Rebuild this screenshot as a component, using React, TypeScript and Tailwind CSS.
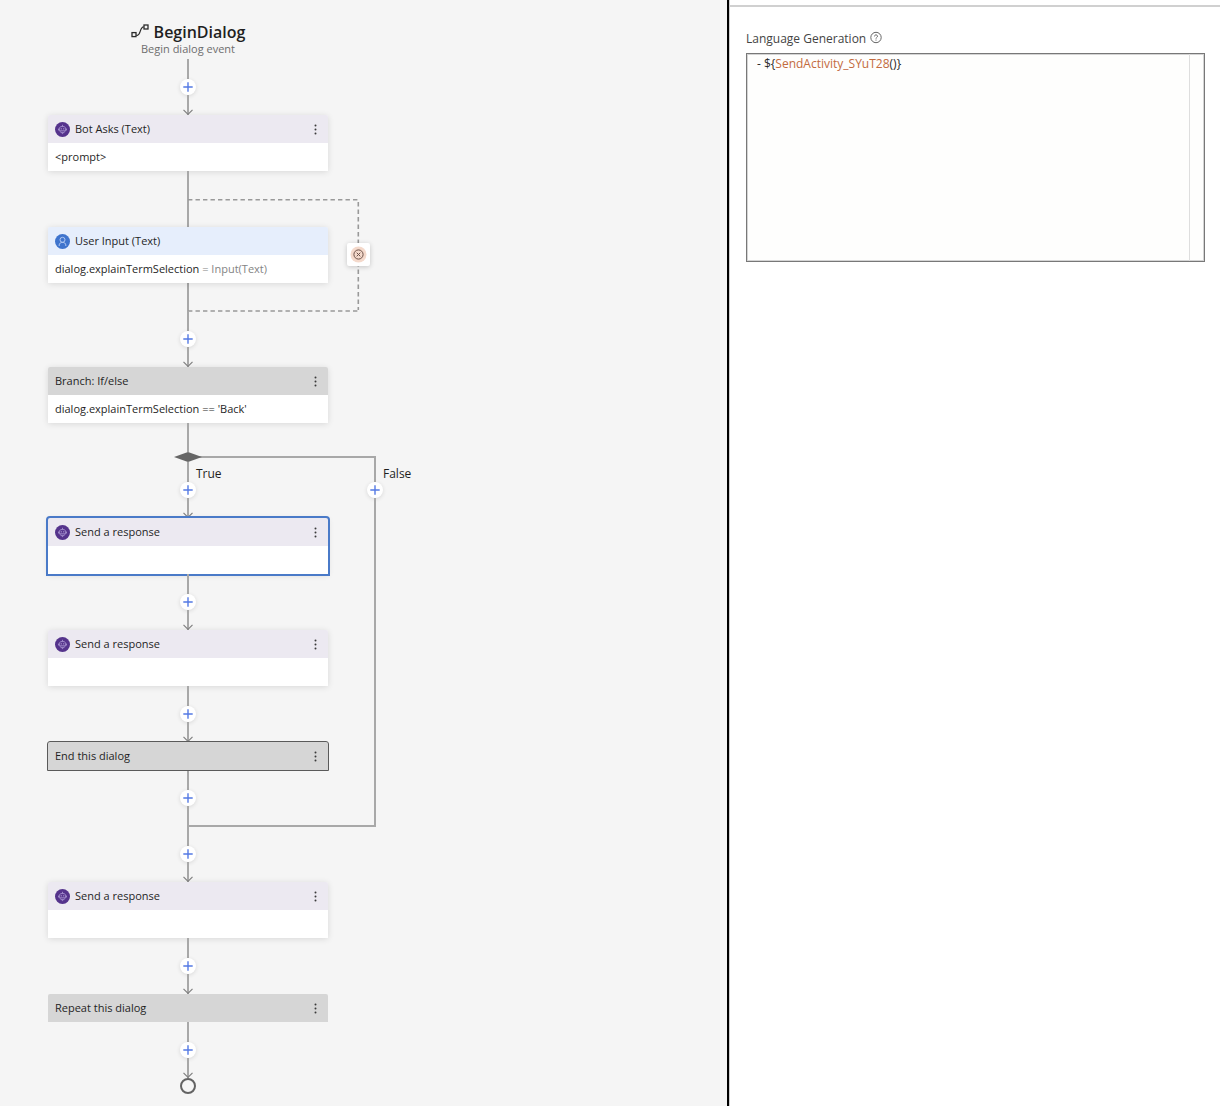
import { useState, type ReactNode } from "react";

function DialogIcon() {
  return (
    <svg width="19" height="16" viewBox="0 0 19 16" fill="none" stroke="#2b2b2b" aria-hidden="true">
      <rect x="1" y="8.6" width="4" height="4" strokeWidth="1.3" />
      <rect x="13" y="1" width="4" height="4" strokeWidth="1.3" />
      <path d="M5.3 11.3h1c3.4 0 2.4-8.4 6.4-8.4" strokeWidth="1.2" />
    </svg>
  );
}

function BotIcon() {
  return (
    <svg width="15" height="15" viewBox="0 0 15 15" fill="none" aria-hidden="true">
      <circle cx="7.5" cy="7.5" r="7.5" fill="#55338c" />
      <g stroke="#a692cf" strokeWidth="0.9">
        <path d="M7.5 2.8v1.6M5.6 4.6h3.8l1.2 1.5v2.8l-1.6 1.5H6L4.4 8.9V6.1zM3.5 6.6v1.8M11.5 6.6v1.8M5 8.8h5M6.8 11.6h1.4" />
      </g>
      <circle cx="6.2" cy="6.8" r="0.6" fill="#c9bbe6" />
      <circle cx="8.8" cy="6.8" r="0.6" fill="#c9bbe6" />
    </svg>
  );
}

function UserIcon() {
  return (
    <svg width="15" height="15" viewBox="0 0 15 15" fill="none" aria-hidden="true">
      <circle cx="7.5" cy="7.5" r="7.5" fill="#3f74cd" />
      <g stroke="#bcd0f5" strokeWidth="0.9">
        <circle cx="7.5" cy="5.8" r="2.5" />
        <path d="M4.2 12V10.9c0-1.5 1.5-2.5 3.3-2.5s3.3 1 3.3 2.5V12" />
      </g>
    </svg>
  );
}

function AddButton() {
  return (
    <button
      type="button"
      aria-label="Add action"
      className="flex h-4 w-4 items-center justify-center rounded-full bg-white shadow-[0_1px_4px_rgba(0,0,0,0.12)]"
    >
      <svg width="10" height="10" viewBox="0 0 10 10" stroke="#5479e4" strokeWidth="1.4" aria-hidden="true">
        <path d="M5 0.3v9.4M0.3 5h9.4" />
      </svg>
    </button>
  );
}

function Arrow() {
  return (
    <svg
      className="absolute bottom-0 left-1/2 -translate-x-1/2"
      width="12"
      height="6"
      viewBox="0 0 12 6"
      fill="none"
      stroke="#808080"
      strokeWidth="1.2"
      aria-hidden="true"
    >
      <path d="M1.5 0.8L6 5.3 10.5 0.8" />
    </svg>
  );
}

function Line({ className }: { className: string }) {
  return <div className={`w-0.5 bg-[#a8a8a8] ${className}`} />;
}

function Connector() {
  return (
    <div className="relative flex h-14 flex-col items-center">
      <Line className="flex-1" />
      <AddButton />
      <Line className="flex-1" />
      <Arrow />
    </div>
  );
}

type NodeProps = {
  title: string;
  header: string;
  icon?: ReactNode;
  frame?: string;
  menu?: boolean;
  children?: ReactNode;
  body?: boolean;
};

function ActionNode({ title, header, icon, frame = "", menu = true, children, body = true }: NodeProps) {
  return (
    <section className={`w-full rounded-t-[2px] ${body ? "shadow-[0_1px_6px_rgba(0,0,0,0.12)]" : ""} ${frame}`}>
      <header className={`flex h-7 items-center gap-[5px] rounded-t-[2px] px-[7px] ${header}`}>
        {icon}
        <h2 className="flex-1 text-[11px] leading-4">{title}</h2>
        {menu && (
          <button type="button" aria-label={`${title} menu`} className="flex h-5 w-3 items-center justify-center">
            <svg width="3" height="11" viewBox="0 0 3 11" fill="#3a3a3a" aria-hidden="true">
              <circle cx="1.5" cy="1.5" r="1" />
              <circle cx="1.5" cy="5.5" r="1" />
              <circle cx="1.5" cy="9.5" r="1" />
            </svg>
          </button>
        )}
      </header>
      {body && <p className="flex h-7 items-center bg-white px-[7px] text-[11px] leading-4 whitespace-pre">{children}</p>}
    </section>
  );
}

const BOT = "bg-[#ece9f1]";
const FLOW = "bg-[#d6d6d6]";

function InvalidPrompt() {
  return (
    <div className="absolute -top-7 left-1/2 h-28 w-[182px]">
      <svg
        width="172"
        height="113"
        viewBox="0 0 172 113"
        fill="none"
        stroke="#999"
        strokeWidth="1.6"
        strokeDasharray="4.4 3.1"
        aria-hidden="true"
      >
        <path d="M0 0.8H170.3V111" />
        <path d="M0 112H170.3" />
      </svg>
      <button
        type="button"
        aria-label="Invalid prompt"
        className="absolute top-11 right-0 flex h-[23px] w-[23px] items-center justify-center rounded-[2px] bg-white shadow-[0_1px_5px_rgba(0,0,0,0.2)]"
      >
        <svg width="17" height="17" viewBox="0 0 17 17" fill="none" aria-hidden="true">
          <circle cx="8.5" cy="8.5" r="8" fill="#f4d9cb" />
          <circle cx="8.5" cy="8.5" r="4.6" stroke="#6d5249" />
          <path d="M6.7 6.7l3.6 3.6M10.3 6.7l-3.6 3.6" stroke="#6d5249" />
        </svg>
      </button>
    </div>
  );
}

function FalseLane() {
  return (
    <div className="absolute top-[33px] left-1/2 flex h-[371px] w-[188px] flex-col items-end border-y-2 border-[#a8a8a8]">
      <div className="relative flex w-0.5 flex-1 flex-col items-center">
        <Line className="h-6" />
        <AddButton />
        <Line className="flex-1" />
        <span className="absolute top-2 left-[9px] text-xs leading-4">False</span>
      </div>
    </div>
  );
}

function Canvas() {
  return (
    <main className="min-w-[440px] flex-1 bg-[#f5f5f5] pt-5 pl-12">
      <div className="flex w-[280px] flex-col items-center">
        <div className="flex h-6 items-center gap-1">
          <DialogIcon />
          <h1 className="text-base leading-6 font-semibold">BeginDialog</h1>
        </div>
        <p className="h-[15px] text-[11px] leading-[10px] text-[#6e6e6e]">Begin dialog event</p>
        <Connector />
        <ActionNode title="Bot Asks (Text)" header={BOT} icon={<BotIcon />}>
          {"<prompt>"}
        </ActionNode>
        <Line className="h-14" />
        <div className="relative w-full">
          <InvalidPrompt />
          <div className="relative w-full">
            <ActionNode title="User Input (Text)" header="bg-[#e6eefc]" icon={<UserIcon />} menu={false}>
              dialog.explainTermSelection<span className="text-[#848484]"> = Input(Text)</span>
            </ActionNode>
          </div>
        </div>
        <Line className="h-7" />
        <Connector />
        <ActionNode title="Branch: If/else" header={FLOW}>
          dialog.explainTermSelection == 'Back'
        </ActionNode>
        <div className="relative flex w-full flex-col items-center">
          <FalseLane />
          <Line className="h-[29px]" />
          <div className="relative -my-px flex h-3 items-center">
            <svg width="28" height="10" viewBox="0 0 28 10" fill="#666" aria-hidden="true">
              <path d="M0 5L14 0l14 5-14 5z" />
            </svg>
          </div>
          <div className="relative flex h-14 flex-col items-center">
            <Line className="h-5" />
            <AddButton />
            <Line className="flex-1" />
            <Arrow />
            <span className="absolute top-1 left-1/2 pl-2 text-xs leading-4">True</span>
          </div>
          <ActionNode
            title="Send a response"
            header={BOT}
            icon={<BotIcon />}
            frame="relative outline-2 outline-[#4a7ac8]"
          />
          <Connector />
          <ActionNode title="Send a response" header={BOT} icon={<BotIcon />} />
          <Connector />
          <ActionNode title="End this dialog" header={FLOW} body={false} frame="relative outline outline-[#5a5a5a]" />
          <Line className="h-5" />
          <AddButton />
          <Line className="h-5" />
        </div>
        <Connector />
        <ActionNode title="Send a response" header={BOT} icon={<BotIcon />} />
        <Connector />
        <ActionNode title="Repeat this dialog" header={FLOW} body={false} />
        <Connector />
        <div className="h-4 w-4 rounded-full border-2 border-[#636363]" />
      </div>
    </main>
  );
}

function Highlighted({ text }: { text: string }) {
  return (
    <>
      {text.split(/(\w+(?=\(\)))/).map((part, i) => (
        <span key={i} className={i % 2 ? "text-[#c36b3d]" : "text-[#2a2a2a]"}>
          {part}
        </span>
      ))}
    </>
  );
}

function Properties() {
  const [text, setText] = useState("- ${SendActivity_SYuT28()}");
  return (
    <aside className="w-[493px] shrink-0 border-l-2 border-black bg-white shadow-[inset_1px_0_0_#cfcfcf]">
      <div className="mt-[5px] border-t-2 border-[#d0d0d0] pt-6 pr-[15px] pl-[17px]">
        <div className="flex h-[22px] items-start gap-1">
          <label htmlFor="lg" className="text-xs leading-4 text-[#444]">
            Language Generation
          </label>
          <button type="button" aria-label="Help">
            <svg width="12" height="13" viewBox="0 0 12 13" fill="none" stroke="#555" strokeWidth="0.9" aria-hidden="true">
              <circle cx="6" cy="6.5" r="5.2" />
              <path d="M4.5 5.4c0-2 3-2 3 0 0 1-1.5 1.1-1.5 2.2M6 8.6v1" />
            </svg>
          </button>
        </div>
        <div className="relative h-[209px] border border-[#787878] bg-[#fefefd] text-xs leading-5 ring-1 ring-[#d4d4d4] ring-inset">
          <pre aria-hidden="true" className="h-full px-[10px] font-[inherit]">
            <Highlighted text={text} />
          </pre>
          <div className="absolute inset-y-0 right-[14px] w-px bg-[#dedede]" />
          <textarea
            id="lg"
            value={text}
            onChange={(e) => setText(e.target.value)}
            spellCheck={false}
            className="absolute inset-0 resize-none bg-transparent px-[10px] text-transparent caret-black outline-none"
          />
        </div>
      </div>
    </aside>
  );
}

export default function App() {
  return (
    <div className="flex min-h-screen font-['Open_Sans','Noto_Sans',sans-serif] text-[#1f1f1f]">
      <Canvas />
      <Properties />
    </div>
  );
}
